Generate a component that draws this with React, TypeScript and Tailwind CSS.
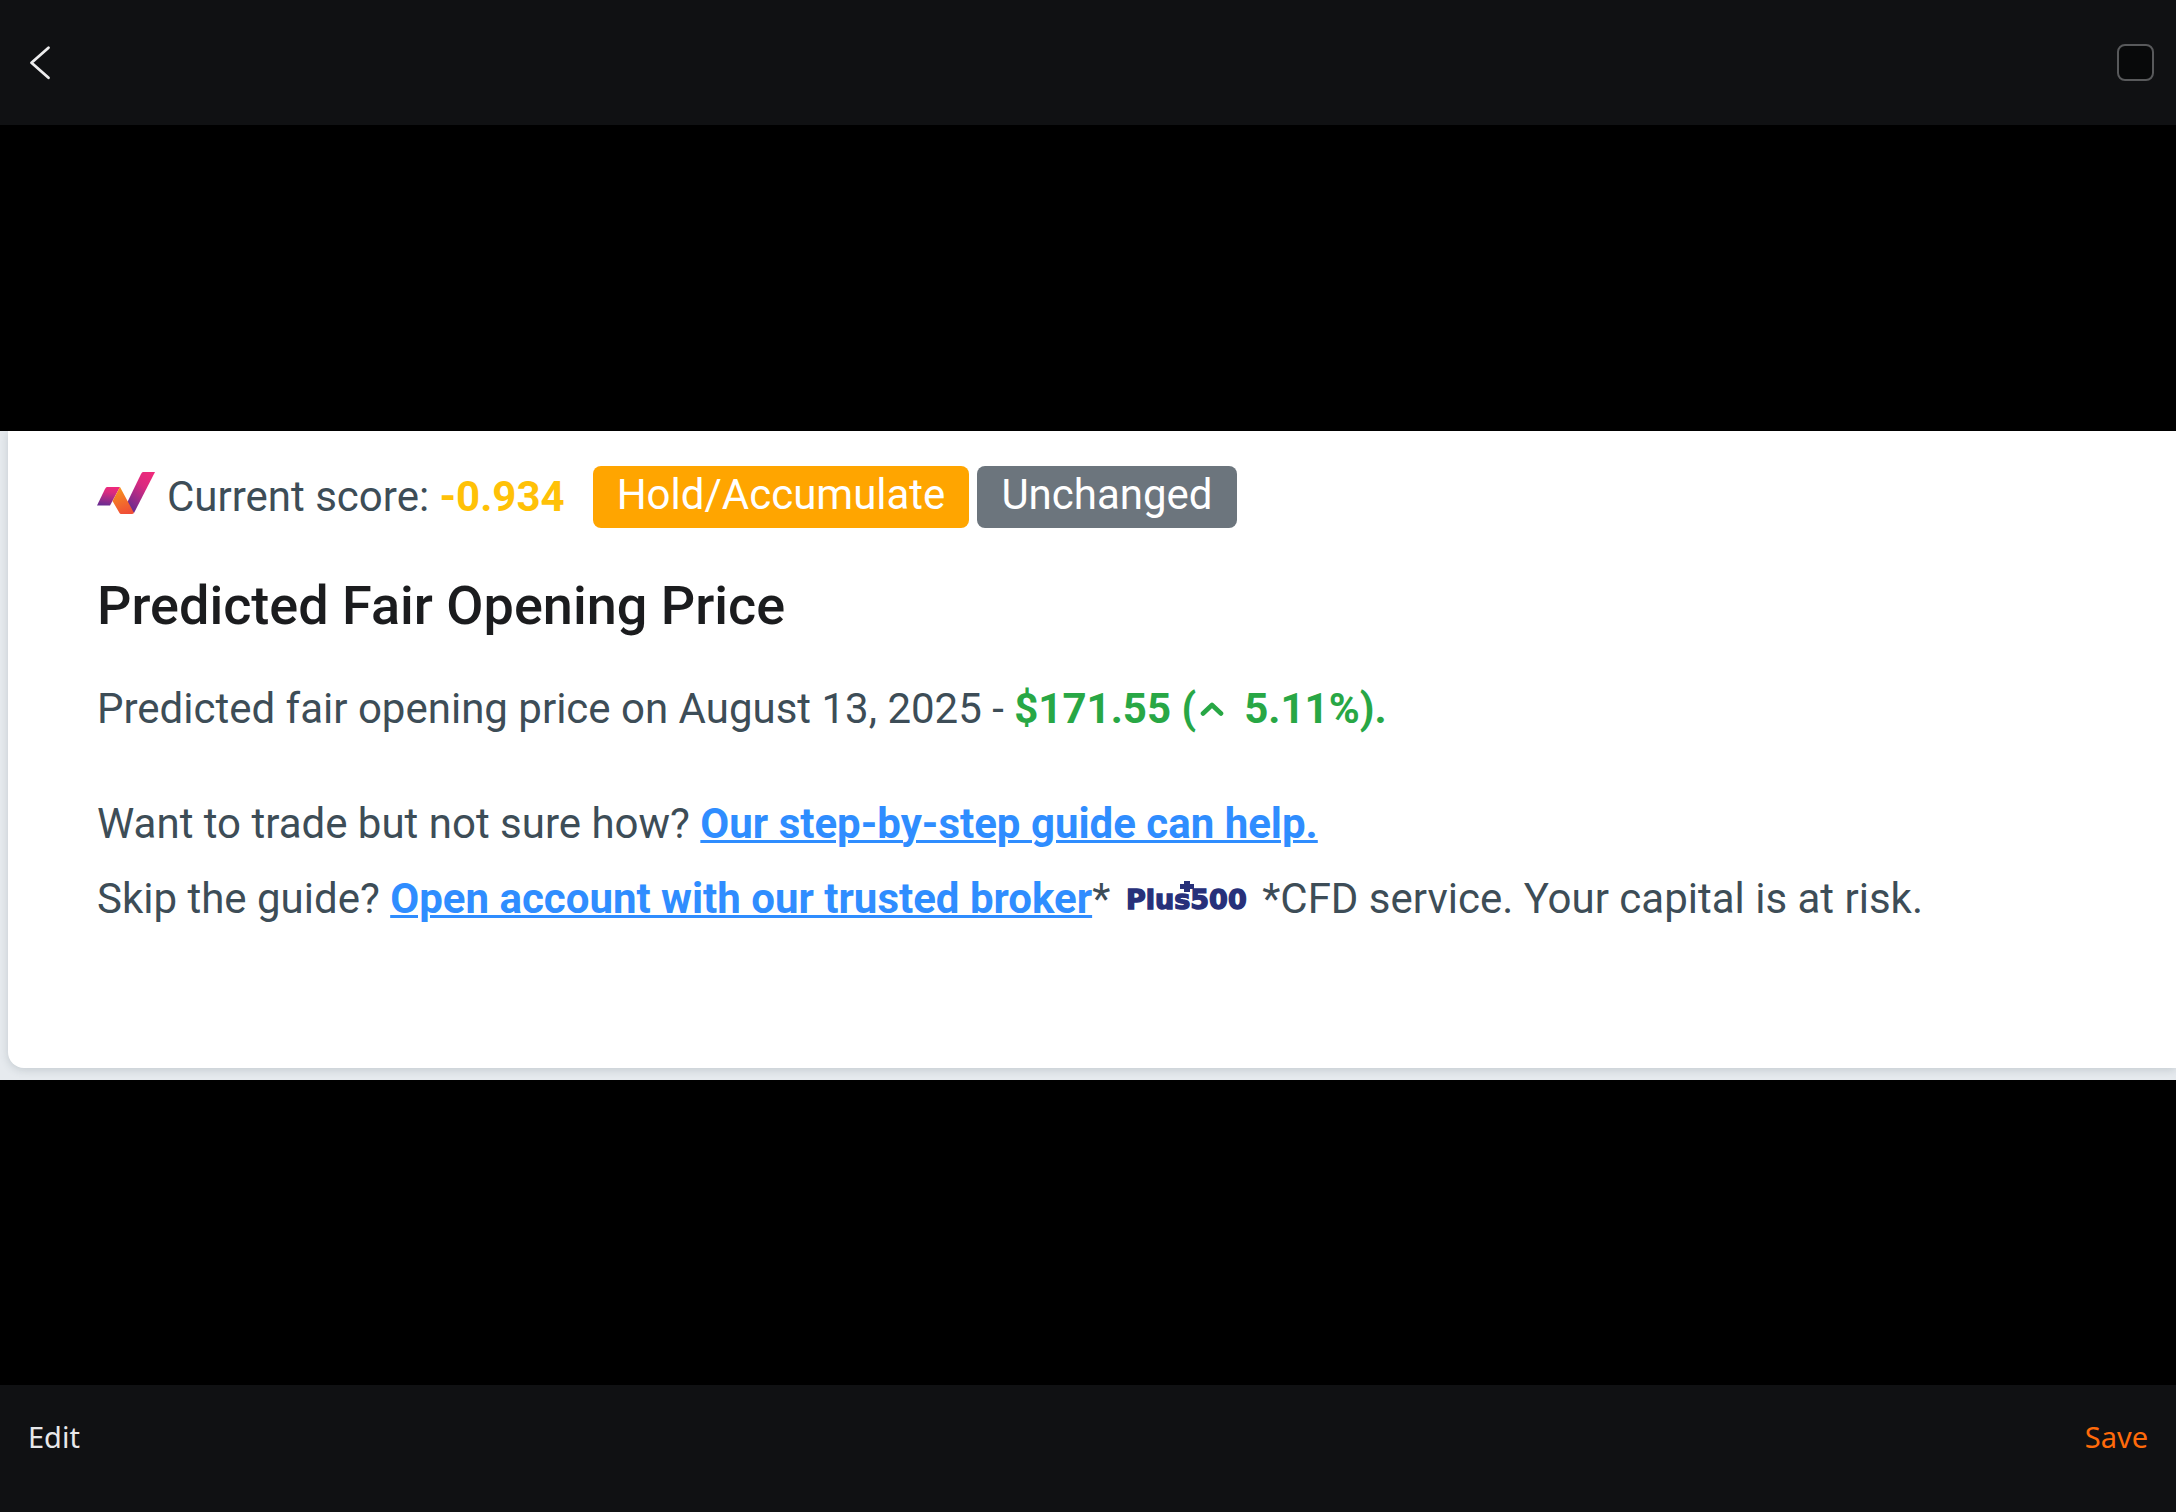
function BackIcon() {
  return (
    <svg
      viewBox="0 0 24 36"
      className="w-6 h-9"
      fill="none"
      stroke="#ededee"
      strokeWidth="2.8"
      strokeLinecap="round"
      strokeLinejoin="round"
      aria-hidden="true"
    >
      <path d="M20.5 2.700 L3.5 17.700 L20.5 32.700" />
    </svg>
  );
}

function ScoreLogo() {
  return (
    <svg viewBox="0 0 58 42" className="w-[58px] h-[42px] mb-2 shrink-0" aria-hidden="true">
      <defs>
        <linearGradient id="tail" x1="0.6" y1="0" x2="0.4" y2="1">
          <stop offset="0" stopColor="#ee2a7b" />
          <stop offset="0.3" stopColor="#d92a80" />
          <stop offset="1" stopColor="#6a2c91" />
        </linearGradient>
        <linearGradient id="arm" x1="0.8" y1="0" x2="0.2" y2="1">
          <stop offset="0" stopColor="#ee2a7b" />
          <stop offset="0.35" stopColor="#d92a80" />
          <stop offset="1" stopColor="#5f2c91" />
        </linearGradient>
        <linearGradient id="fold" x1="0.3" y1="0" x2="0.6" y2="1">
          <stop offset="0" stopColor="#f7941d" />
          <stop offset="1" stopColor="#f04e37" />
        </linearGradient>
      </defs>
      <path d="M10 15 H23 L13 33.5 H0 L8 17 Q9 15 10 15 Z" fill="url(#tail)" />
      <path d="M46 0 H58 L37 41 L29 33 L44 2 Q45 0 46 0 Z" fill="url(#arm)" />
      <path d="M23 15 L37 41 Q36 42 35 42 H24 Q23 42 22.500 41 L15.500 29 Z" fill="url(#fold)" />
    </svg>
  );
}

function BrokerLogo() {
  return (
    <svg viewBox="0 0 124 34" className="w-[124px] h-[34px] shrink-0" role="img" aria-label="Plus500">
      <text
        x="0"
        y="28"
        fontFamily="DejaVu Sans"
        fontWeight="700"
        fontSize="27"
        fill="#27307a"
        stroke="#27307a"
        strokeWidth="1.4"
      >
        Plus500
      </text>
      <path d="M58 0 H64 V3 H68 V8 H64 V11 H58 V8 H54 V3 H58 Z" fill="#27307a" />
    </svg>
  );
}

function CaretUp() {
  return (
    <svg
      viewBox="0 0 24 16"
      className="inline-block w-6 h-4 ml-1 mr-5 mb-1 align-middle"
      fill="none"
      stroke="currentColor"
      strokeWidth="4.6"
      strokeLinecap="round"
      strokeLinejoin="round"
      aria-hidden="true"
    >
      <path d="M3 12.500 L12 4 L21 12.500" />
    </svg>
  );
}

export default function App() {
  return (
    <div className="min-h-screen flex flex-col bg-black font-['Roboto',sans-serif]">
      <header className="h-[125px] px-6 flex items-center justify-between bg-[#101113]">
        <button type="button" aria-label="Back" className="p-1">
          <BackIcon />
        </button>
        <input
          type="checkbox"
          aria-label="Select image"
          className="appearance-none w-[37px] h-[37px] rounded-lg border-2 border-[#58595b] bg-[#08090a] -mr-0.5"
        />
      </header>

      <main className="flex-1 flex flex-col justify-center">
        <div className="bg-[#e6eaee] pl-2 pb-3 overflow-hidden">
          <section className="bg-white rounded-bl-2xl shadow-[0_2px_8px_rgba(60,80,90,0.2)] pl-[89px] pt-[35px] pb-[132px] text-[42px] leading-[75px] text-[#3d4d57]">
            <div className="flex items-center leading-[62px]">
              <ScoreLogo />
              <p className="ml-3">
                Current score: <strong className="font-bold text-[#ffc107]">-0.934</strong>
              </p>
              <span className="ml-7 px-6 pb-1 leading-[58px] rounded-lg bg-[#ffa500] text-white">
                Hold/Accumulate
              </span>
              <span className="ml-2 px-6 pb-1 leading-[58px] rounded-lg bg-[#6c757d] text-white">
                Unchanged
              </span>
            </div>

            <h2 className="mt-10 text-[54px] leading-[75px] font-medium text-[#1b1c1e]">
              Predicted Fair Opening Price
            </h2>

            <p className="mt-7">
              Predicted fair opening price on August 13, 2025 -{" "}
              <strong className="font-bold text-[#28a745]">
                $171.55 (<CaretUp />5.11%).
              </strong>
            </p>

            <p className="mt-10">
              Want to trade but not sure how?{" "}
              <a href="#guide" className="font-bold text-[#2f8dff] underline decoration-[3px]">
                Our step-by-step guide can help.
              </a>
            </p>
            <div className="flex items-center">
              <p>
                Skip the guide?{" "}
                <a href="#broker" className="font-bold text-[#2f8dff] underline decoration-[3px]">
                  Open account with our trusted broker
                </a>
                *
              </p>
              <span className="ml-4 mr-3">
                <BrokerLogo />
              </span>
              <p>*CFD service. Your capital is at risk.</p>
            </div>
          </section>
        </div>
      </main>

      <footer className="h-[127px] px-7 pt-8 flex items-start justify-between bg-[#101113] text-[29px] leading-10 font-['Noto_Sans',sans-serif]">
        <button type="button" className="text-[#e8e8ea]">
          Edit
        </button>
        <button type="button" className="text-[#ff6a0a]">
          Save
        </button>
      </footer>
    </div>
  );
}
